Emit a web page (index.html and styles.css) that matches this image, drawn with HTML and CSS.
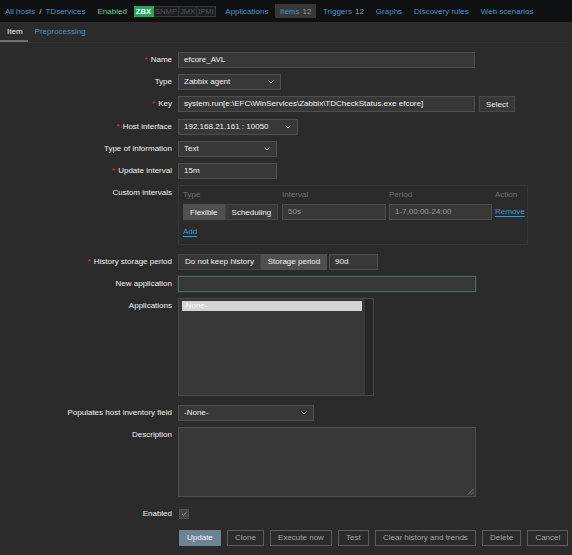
FILE: index.html
```html
<!DOCTYPE html>
<html>
<head>
<meta charset="utf-8">
<link rel="stylesheet" href="styles.css">
</head>
<body>
<header class="topnav">
  <div class="crumbs"><a class="link">All hosts</a><span class="sep">/</span><a class="link">TDservices</a></div>
  <span class="status">Enabled</span>
  <div class="avail"><span class="tag on">ZBX</span><span class="tag">SNMP</span><span class="tag">JMX</span><span class="tag">IPMI</span></div>
  <ul class="hostnav">
    <li><a class="link">Applications</a></li>
    <li class="active"><a class="link">Items</a><span class="count">12</span></li>
    <li><a class="link">Triggers</a><span class="count">12</span></li>
    <li><a class="link">Graphs</a></li>
    <li><a class="link">Discovery rules</a></li>
    <li><a class="link">Web scenarios</a></li>
  </ul>
</header>

<nav class="tabs">
  <span class="tab current">Item</span>
  <span class="tab link">Preprocessing</span>
</nav>

<form class="form">
  <div class="row">
    <label class="label req">Name</label>
    <div class="field"><div class="input w297">efcore_AVL</div></div>
  </div>
  <div class="row">
    <label class="label">Type</label>
    <div class="field"><div class="input select w103"><span>Zabbix agent</span><svg class="chev" viewBox="0 0 6 4"><polyline points="0.5,0.5 3,3 5.5,0.5"/></svg></div></div>
  </div>
  <div class="row">
    <label class="label req">Key</label>
    <div class="field"><div class="input w297">system.run[e:\EFC\WinServices\Zabbix\TDCheckStatus.exe efcore]</div><span class="btn-alt">Select</span></div>
  </div>
  <div class="row">
    <label class="label req">Host interface</label>
    <div class="field"><div class="input select w120"><span>192.168.21.161 : 10050</span><svg class="chev" viewBox="0 0 6 4"><polyline points="0.5,0.5 3,3 5.5,0.5"/></svg></div></div>
  </div>
  <div class="row">
    <label class="label">Type of information</label>
    <div class="field"><div class="input select w99"><span>Text</span><svg class="chev" viewBox="0 0 6 4"><polyline points="0.5,0.5 3,3 5.5,0.5"/></svg></div></div>
  </div>
  <div class="row">
    <label class="label req">Update interval</label>
    <div class="field"><div class="input w99">15m</div></div>
  </div>
  <div class="row">
    <label class="label">Custom intervals</label>
    <div class="field">
      <div class="intervals">
        <div class="int-grid">
          <span class="th">Type</span><span class="th">Interval</span><span class="th">Period</span><span class="th">Action</span>
          <div class="seg"><span class="seg-item on">Flexible</span><span class="seg-item">Scheduling</span></div>
          <div class="input dim">50s</div>
          <div class="input dim">1-7,00:00-24:00</div>
          <a class="link ul">Remove</a>
        </div>
        <a class="link ul add">Add</a>
      </div>
    </div>
  </div>
  <div class="row r-history">
    <label class="label req">History storage period</label>
    <div class="field"><div class="seg"><span class="seg-item w83">Do not keep history</span><span class="seg-item on w66">Storage period</span></div><div class="input w49 ml2">90d</div></div>
  </div>
  <div class="row">
    <label class="label">New application</label>
    <div class="field"><div class="input focus w298"></div></div>
  </div>
  <div class="row">
    <label class="label">Applications</label>
    <div class="field">
      <div class="listbox">
        <div class="options"><div class="opt sel">-None-</div></div>
        <div class="scroll"></div>
      </div>
    </div>
  </div>
  <div class="row r-inv">
    <label class="label">Populates host inventory field</label>
    <div class="field"><div class="input select w136"><span>-None-</span><svg class="chev" viewBox="0 0 6 4"><polyline points="0.5,0.5 3,3 5.5,0.5"/></svg></div></div>
  </div>
  <div class="row">
    <label class="label">Description</label>
    <div class="field"><div class="textarea"><svg class="grip" viewBox="0 0 7 7"><line x1="6.5" y1="1" x2="1" y2="6.5"/><line x1="6.5" y1="4" x2="4" y2="6.5"/></svg></div></div>
  </div>
  <div class="row r-enabled">
    <label class="label lh10">Enabled</label>
    <div class="field"><span class="check"><svg viewBox="0 0 10 10"><polyline points="2.5,5 4.3,6.8 7.8,3.2"/></svg></span></div>
  </div>
  <div class="row r-buttons">
    <span></span>
    <div class="field buttons">
      <span class="btn primary">Update</span>
      <span class="btn">Clone</span>
      <span class="btn">Execute now</span>
      <span class="btn">Test</span>
      <span class="btn">Clear history and trends</span>
      <span class="btn">Delete</span>
      <span class="btn">Cancel</span>
    </div>
  </div>
</form>
</body>
</html>
```

FILE: styles.css
```css
* { box-sizing: border-box; }
html, body { margin: 0; padding: 0; }
body {
  background: #2b2b2b;
  font-family: "Liberation Sans", Arial, sans-serif;
  font-size: 8px;
  color: #f2f2f2;
  width: 572px;
  height: 555px;
  overflow: hidden;
}
.link { color: #4796c4; text-decoration: none; }

/* top navigation */
.topnav {
  height: 22px;
  background: #0e1012;
  display: flex;
  align-items: center;
  padding-left: 5px;
  white-space: nowrap;
}
.crumbs { display: flex; align-items: center; }
.sep { color: #d0d0d0; margin: 0 4px; }
.status { color: #59db8f; margin-left: 12px; }
.avail { display: flex; margin-left: 7px; height: 11px; }
.tag {
  display: flex;
  align-items: center;
  padding: 0 1px;
  color: #555;
  background: #1b1d1f;
  border: 1px solid #383838;
  border-left: none;
  font-size: 7.6px;
}
.tag.on {
  background: #2f9f5c;
  color: #ffffff;
  border-color: #2f9f5c;
  font-weight: bold;
  padding: 0 2px;
}
.hostnav {
  list-style: none;
  margin: 0 0 0 4px;
  padding: 0;
  display: flex;
  gap: 1px;
}
.hostnav li {
  height: 14px;
  display: flex;
  align-items: center;
  padding: 0 5.5px;
}
.hostnav li.active { background: #383838; padding: 0 5px; }
.count { color: #9a9a9a; margin-left: 3px; }

/* tabs */
.tabs {
  height: 21px;
  display: flex;
  align-items: stretch;
  border-bottom: 1px solid #323232;
}
.tab {
  display: flex;
  align-items: center;
  padding: 0 6px 0 7px;
  border-bottom: 2px solid transparent;
}
.tab.current { color: #f2f2f2; border-bottom-color: #707070; padding: 0 5px 0 7px; }

/* form */
.form {
  display: flex;
  flex-direction: column;
  gap: 6.2px;
  padding-top: 9px;
}
.row {
  display: grid;
  grid-template-columns: 172px 1fr;
  column-gap: 6px;
}
.label {
  text-align: right;
  line-height: 16px;
  color: #f2f2f2;
  white-space: nowrap;
}
.label.lh10 { line-height: 10px; }
.req::before { content: "*"; color: #e33734; margin-right: 3px; }
.field { display: flex; align-items: flex-start; }

.input {
  height: 16px;
  background: #383838;
  border: 1px solid #4f4f4f;
  padding: 0 5px;
  line-height: 14px;
  color: #f2f2f2;
  white-space: nowrap;
  overflow: hidden;
}
.input.dim { color: #9a9a9a; }
.select { display: flex; align-items: center; justify-content: space-between; padding-right: 6px; }
.chev { width: 6px; height: 4px; fill: none; stroke: #bdbdbd; stroke-width: 1; }
.w297 { width: 297px; }
.w298 { width: 298px; }
.w103 { width: 103px; }
.w120 { width: 120px; }
.w99 { width: 99px; }
.w136 { width: 136px; }
.w49 { width: 49px; }
.w83 { width: 83px; }
.w66 { width: 66px; }
.ml2 { margin-left: 2px; }

.btn-alt {
  margin-left: 4px;
  height: 16px;
  width: 36px;
  display: flex;
  align-items: center;
  justify-content: center;
  background: #383838;
  border: 1px solid #4a4a4a;
  color: #f2f2f2;
}

/* custom intervals */
.intervals {
  width: 350px;
  height: 60px;
  border: 1px solid #373737;
  padding: 4px 4px 0 4px;
}
.int-grid {
  display: grid;
  grid-template-columns: 96px 104px 103px auto;
  column-gap: 3px;
  row-gap: 4px;
}
.th { color: #747474; line-height: 10px; }
.seg { display: flex; height: 16px; }
.seg-item {
  display: flex;
  align-items: center;
  justify-content: center;
  background: #383838;
  border: 1px solid #444;
  color: #f2f2f2;
  padding: 0 6px;
  white-space: nowrap;
}
.seg-item.w83, .seg-item.w66 { padding: 0; }
.seg-item.on { background: #4f4f4f; border-color: #4f4f4f; }
.ul { text-decoration: underline; text-underline-offset: 2px; line-height: 16px; }
.add { display: inline-block; margin-top: 7px; line-height: 10px; }

.r-history { margin-top: 2.6px; }

.input.focus {
  border-color: #4d6a5a;
  box-shadow: 0 0 0 1px #303d36;
}

/* listbox */
.listbox {
  width: 196px;
  height: 98px;
  background: #383838;
  border: 1px solid #4a4a4a;
  display: flex;
}
.options { flex: 1; padding: 2px 3px 0 3px; }
.opt { height: 10px; line-height: 10px; padding-left: 1px; }
.opt.sel { background: #d4d4d4; color: #f7f7f7; }
.scroll { width: 8px; background: #272727; }

.r-inv { margin-top: 2.4px; }

.textarea {
  width: 298px;
  height: 70px;
  background: #383838;
  border: 1px solid #4f4f4f;
  position: relative;
}
.grip {
  position: absolute;
  right: 1px;
  bottom: 1px;
  width: 7px;
  height: 7px;
  stroke: #8a8a8a;
  stroke-width: 0.8;
}

.r-enabled { margin-top: 5.6px; }
.check {
  margin-left: 1px;
  width: 10px;
  height: 10px;
  background: #454545;
  border: 1px solid #4f4f4f;
  display: flex;
}
.check svg { width: 100%; height: 100%; fill: none; stroke: #a8a8a8; stroke-width: 1; }

.r-buttons { margin-top: 4.8px; }
.buttons { gap: 6.2px; margin-left: 1px; }
.btn {
  height: 16px;
  display: flex;
  align-items: center;
  padding: 0 7px;
  border: 1px solid #5c5c5c;
  color: #a6a6a6;
  white-space: nowrap;
}
.btn.primary {
  background: #6b8395;
  border-color: #6b8395;
  color: #f4f4f4;
}
```
